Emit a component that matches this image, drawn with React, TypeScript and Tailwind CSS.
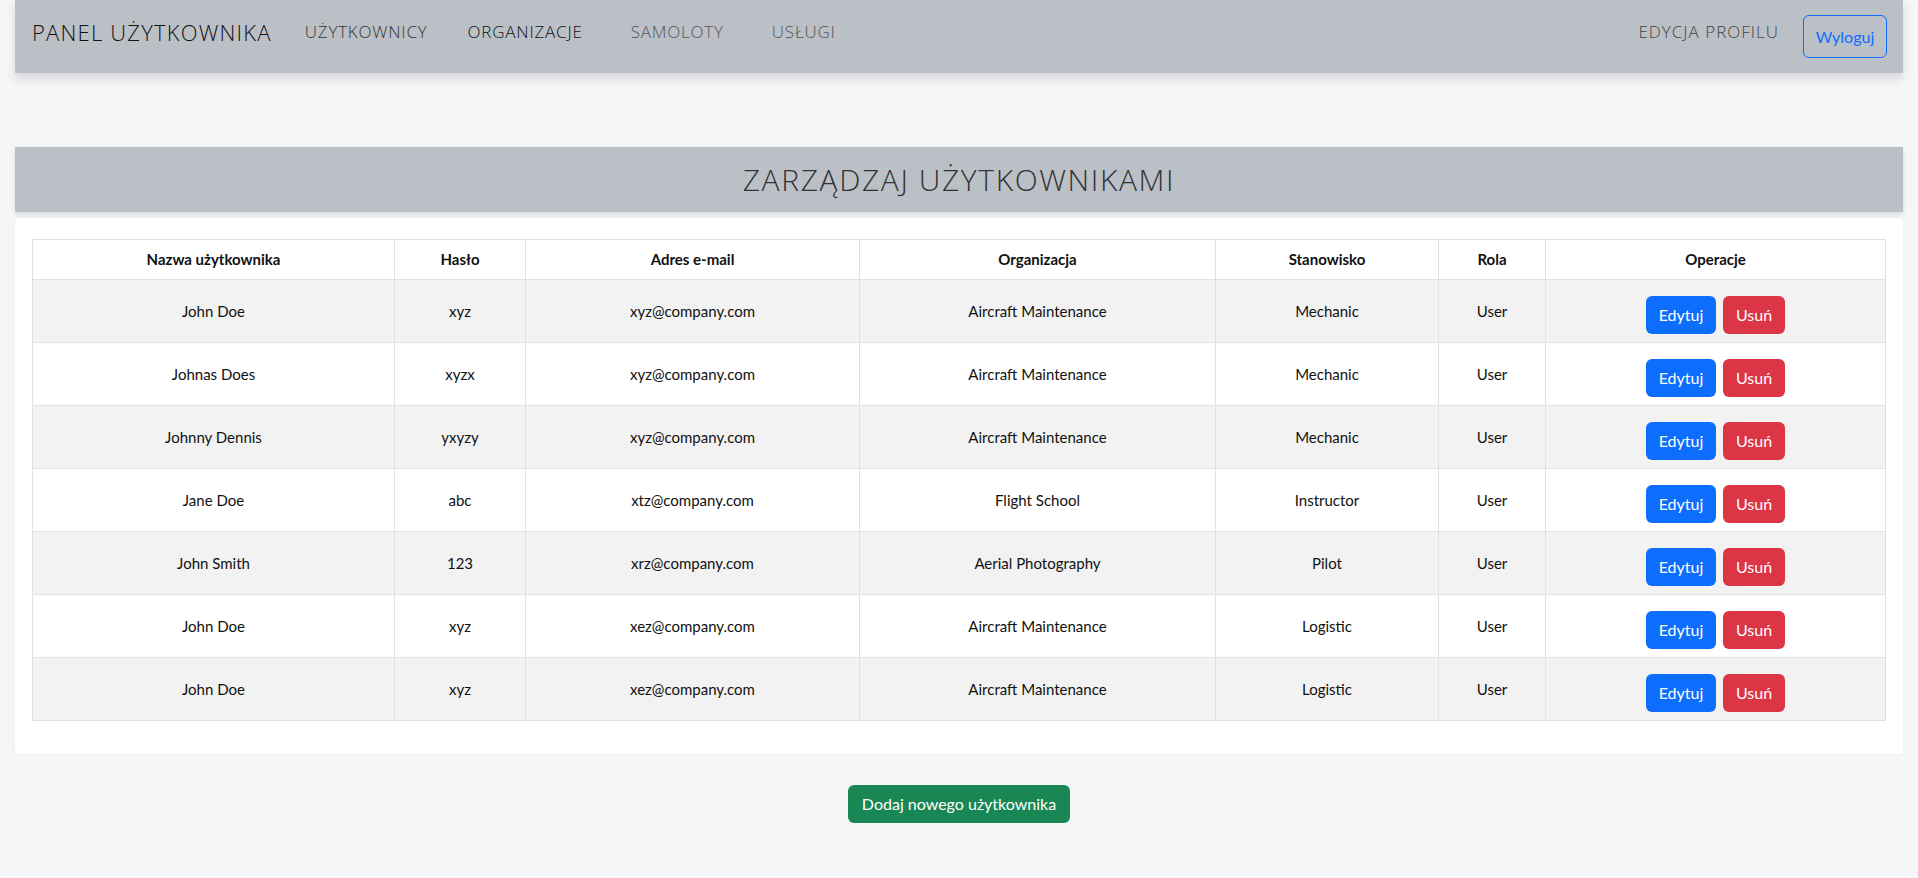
const users = [
  { name: "John Doe", pass: "xyz", email: "xyz@company.com", org: "Aircraft Maintenance", job: "Mechanic", role: "User" },
  { name: "Johnas Does", pass: "xyzx", email: "xyz@company.com", org: "Aircraft Maintenance", job: "Mechanic", role: "User" },
  { name: "Johnny Dennis", pass: "yxyzy", email: "xyz@company.com", org: "Aircraft Maintenance", job: "Mechanic", role: "User" },
  { name: "Jane Doe", pass: "abc", email: "xtz@company.com", org: "Flight School", job: "Instructor", role: "User" },
  { name: "John Smith", pass: "123", email: "xrz@company.com", org: "Aerial Photography", job: "Pilot", role: "User" },
  { name: "John Doe", pass: "xyz", email: "xez@company.com", org: "Aircraft Maintenance", job: "Logistic", role: "User" },
  { name: "John Doe", pass: "xyz", email: "xez@company.com", org: "Aircraft Maintenance", job: "Logistic", role: "User" },
];

const headers = ["Nazwa użytkownika", "Hasło", "Adres e-mail", "Organizacja", "Stanowisko", "Rola", "Operacje"];
const colWidths = ["w-[362px]", "w-[131px]", "w-[334px]", "w-[356px]", "w-[223px]", "w-[107px]", ""];

function Navbar() {
  return (
    <nav className="mx-[15px] flex h-[73px] items-center bg-[#bbc0c7] pb-[9px] pl-[17px] pr-[16px] shadow-[0_6px_10px_rgba(0,0,0,0.13)] font-['Open_Sans',sans-serif]">
      <span className="text-[22px] font-light tracking-[1.2px] text-[#111]">PANEL UŻYTKOWNIKA</span>
      <div className="ml-[33px] flex items-center text-[17px] font-light tracking-[0.8px]">
        <a className="text-[#333]">UŻYTKOWNICY</a>
        <a className="ml-[40px] text-[#111]">ORGANIZACJE</a>
        <a className="ml-[48px] text-[#555]">SAMOLOTY</a>
        <a className="ml-[48px] text-[#555]">USŁUGI</a>
      </div>
      <div className="ml-auto flex items-center">
        <a className="text-[17px] font-light tracking-[1px] text-[#444]">EDYCJA PROFILU</a>
        <button className="ml-[24px] mt-[9px] h-[43px] w-[84px] rounded-[6px] border border-[#0d6efd] text-[16px] text-[#0d6efd] font-['Lato',sans-serif]">
          Wyloguj
        </button>
      </div>
    </nav>
  );
}

export default function App() {
  return (
    <div className="min-h-[878px] bg-[#f5f6f8] pb-[56px]">
      <Navbar />
      <div className="mx-[15px] mt-[74px] flex h-[65px] items-center justify-center bg-[#bbc0c7] shadow-[0_3px_6px_rgba(0,0,0,0.1)]">
        <h1 className="text-[30px] font-light tracking-[1.6px] text-[#333] font-['Open_Sans',sans-serif]">ZARZĄDZAJ UŻYTKOWNIKAMI</h1>
      </div>
      <div className="mx-[15px] mt-[6px] rounded-[4px] bg-white px-[17px] pb-[33px] pt-[21px] shadow-[0_0_3px_rgba(0,0,0,0.05)]">
        <table className="w-full border-collapse text-center text-[15px] text-[#111] font-['Lato',sans-serif]">
          <thead>
            <tr className="h-[40px]">
              {headers.map((h, i) => (
                <th key={h} className={`${colWidths[i]} border border-[#dee2e6] font-bold`}>
                  {h}
                </th>
              ))}
            </tr>
          </thead>
          <tbody>
            {users.map((u, i) => (
              <tr key={i} className={`h-[63px] ${i % 2 === 0 ? "bg-[#f2f2f2]" : "bg-white"}`}>
                <td className="border border-[#dee2e6]">{u.name}</td>
                <td className="border border-[#dee2e6]">{u.pass}</td>
                <td className="border border-[#dee2e6]">{u.email}</td>
                <td className="border border-[#dee2e6]">{u.org}</td>
                <td className="border border-[#dee2e6]">{u.job}</td>
                <td className="border border-[#dee2e6]">{u.role}</td>
                <td className="border border-[#dee2e6]">
                  <div className="flex items-center justify-center gap-[7px] pt-[7px]">
                    <button className="h-[38px] w-[70px] rounded-[6px] bg-[#0d6efd] text-[16px] text-white">Edytuj</button>
                    <button className="h-[38px] w-[62px] rounded-[6px] bg-[#dc3545] text-[16px] text-white">Usuń</button>
                  </div>
                </td>
              </tr>
            ))}
          </tbody>
        </table>
      </div>
      <div className="mt-[31px] flex justify-center">
        <button className="h-[38px] w-[222px] rounded-[6px] bg-[#198754] text-[16px] text-white font-['Lato',sans-serif]">
          Dodaj nowego użytkownika
        </button>
      </div>
    </div>
  );
}
